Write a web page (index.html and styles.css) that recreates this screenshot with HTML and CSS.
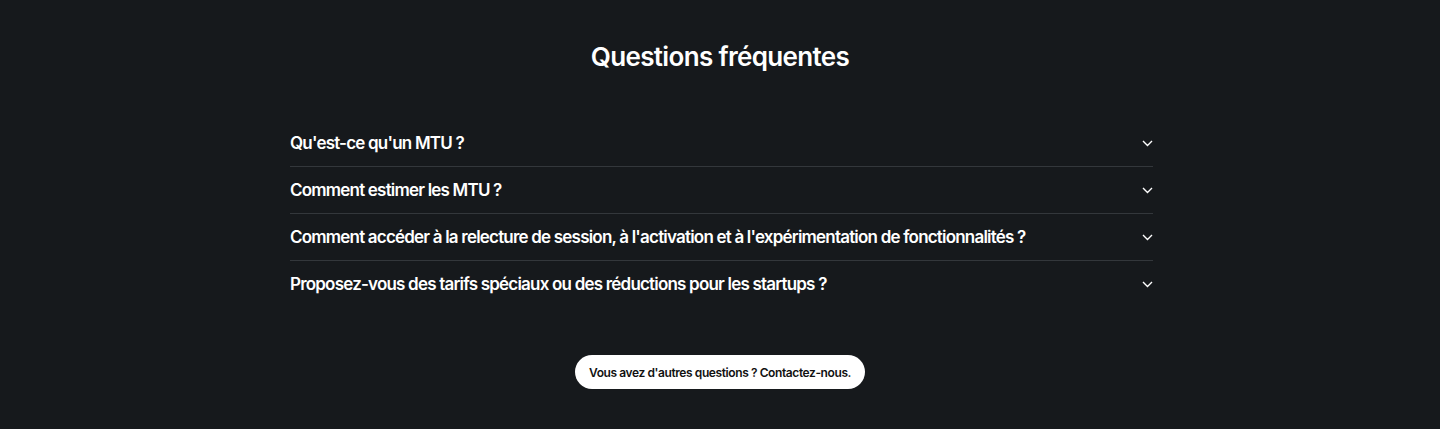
FILE: index.html
```html
<!DOCTYPE html>
<html lang="fr">
<head>
<meta charset="utf-8">
<title>Questions fréquentes</title>
<link rel="stylesheet" href="styles.css">
</head>
<body>
<section class="faq">
  <h2 class="faq-title">Questions fréquentes</h2>
  <ul class="faq-list">
    <li class="faq-item">
      <span class="faq-q">Qu'est-ce qu'un MTU ?</span>
      <svg class="chev" width="11" height="7" viewBox="0 0 11 7"><path d="M1 1l4.5 4.5L10 1" fill="none" stroke="#fff" stroke-width="1.4"/></svg>
    </li>
    <li class="faq-item">
      <span class="faq-q">Comment estimer les MTU ?</span>
      <svg class="chev" width="11" height="7" viewBox="0 0 11 7"><path d="M1 1l4.5 4.5L10 1" fill="none" stroke="#fff" stroke-width="1.4"/></svg>
    </li>
    <li class="faq-item">
      <span class="faq-q">Comment accéder à la relecture de session, à l'activation et à l'expérimentation de fonctionnalités ?</span>
      <svg class="chev" width="11" height="7" viewBox="0 0 11 7"><path d="M1 1l4.5 4.5L10 1" fill="none" stroke="#fff" stroke-width="1.4"/></svg>
    </li>
    <li class="faq-item">
      <span class="faq-q">Proposez-vous des tarifs spéciaux ou des réductions pour les startups ?</span>
      <svg class="chev" width="11" height="7" viewBox="0 0 11 7"><path d="M1 1l4.5 4.5L10 1" fill="none" stroke="#fff" stroke-width="1.4"/></svg>
    </li>
  </ul>
  <a class="contact-btn" href="#">Vous avez d'autres questions ? Contactez-nous.</a>
</section>
</body>
</html>
```
FILE: styles.css
```css
html, body {
  margin: 0;
  padding: 0;
  background: #16191c;
}

body {
  font-family: Inter, "Noto Sans", sans-serif;
  color: #fff;
}

.faq {
  display: flex;
  flex-direction: column;
  align-items: center;
  padding-top: 40px;
}

.faq-title {
  margin: 0;
  font-size: 26px;
  line-height: 34px;
  font-weight: 600;
  letter-spacing: -0.025em;
}

.faq-list {
  list-style: none;
  margin: 46px 0 0 3px;
  padding: 0;
  width: 863px;
}

.faq-item {
  display: flex;
  align-items: center;
  justify-content: space-between;
  height: 46px;
  border-bottom: 1px solid #33373b;
}

.faq-item:last-child {
  border-bottom: none;
}

.faq-q {
  font-size: 17px;
  font-weight: 600;
  letter-spacing: -0.047em;
}

.chev {
  display: block;
}

.contact-btn {
  margin-top: 48px;
  display: inline-flex;
  align-items: center;
  height: 34px;
  padding: 0 14px;
  border-radius: 17px;
  background: #fff;
  color: #111;
  font-size: 12px;
  font-weight: 600;
  letter-spacing: -0.034em;
  text-decoration: none;
}
```
